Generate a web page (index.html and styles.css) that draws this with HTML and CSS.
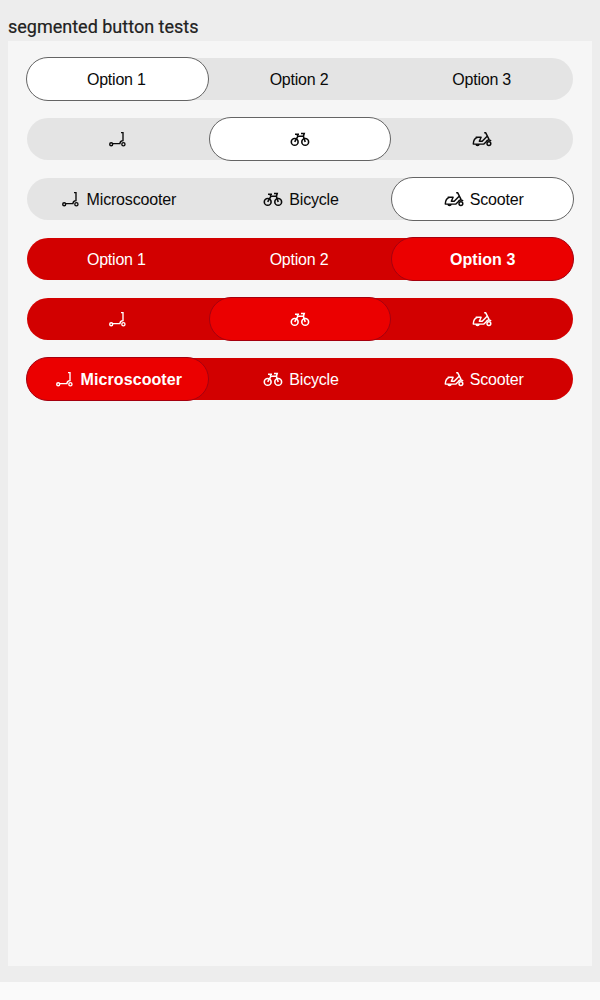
FILE: index.html
```html
<!DOCTYPE html>
<html lang="en">
<head>
<meta charset="utf-8">
<title>segmented button tests</title>
<link rel="stylesheet" href="styles.css">
</head>
<body>
<svg class="defs" aria-hidden="true">
  <symbol id="micro" viewBox="0 0 20 20">
    <circle cx="3.2" cy="15.2" r="1.5"/><circle cx="15.4" cy="15.2" r="1.6"/>
    <path d="M4.8 14.6H11.9C12 12.8 13.2 11.8 15 11.7V3.6H13"/>
  </symbol>
  <symbol id="bike" viewBox="0 0 20 20">
    <g stroke-width="1.6"><circle cx="4.7" cy="12.9" r="3.4"/><circle cx="15.2" cy="12.9" r="3.4"/>
    <path d="M4.7 12.9 7.9 7.3H13.5M5 5.3H9M7.2 5.4 7.9 7.6M11 4.5H14.2L13.4 7.3 15.2 12.9"/></g>
  </symbol>
  <symbol id="scooter" viewBox="0 0 20 20">
    <g stroke-width="1.45" stroke-linejoin="round"><circle cx="16.9" cy="14.6" r="1.9"/>
    <path d="M12.2 3.7H13.6L16.9 10.2 11.9 15.1H1.3C1.4 11.6 3 9 5.6 8.3M3.7 8.3H9.1L7.3 12.2H10.2L14.9 7.4M14 12.8C15 11.2 17.2 10.8 19.2 11.8M4 15.2C4.2 17.1 6.9 17.1 7.1 15.2"/></g>
  </symbol>
</svg>
<main class="page">
  <h1 class="title">segmented button tests</h1>
  <section class="panel">
    <div class="segmented">
      <button class="segment selected"><span class="label option">Option 1</span></button>
      <button class="segment"><span class="label option">Option 2</span></button>
      <button class="segment"><span class="label option">Option 3</span></button>
    </div>
    <div class="segmented">
      <button class="segment"><svg class="icon"><use href="#micro"/></svg></button>
      <button class="segment selected"><svg class="icon"><use href="#bike"/></svg></button>
      <button class="segment"><svg class="icon"><use href="#scooter"/></svg></button>
    </div>
    <div class="segmented">
      <button class="segment"><svg class="icon"><use href="#micro"/></svg><span class="label">Microscooter</span></button>
      <button class="segment"><svg class="icon"><use href="#bike"/></svg><span class="label">Bicycle</span></button>
      <button class="segment selected"><svg class="icon"><use href="#scooter"/></svg><span class="label">Scooter</span></button>
    </div>
    <div class="segmented red">
      <button class="segment"><span class="label option">Option 1</span></button>
      <button class="segment"><span class="label option">Option 2</span></button>
      <button class="segment selected"><span class="label">Option 3</span></button>
    </div>
    <div class="segmented red">
      <button class="segment"><svg class="icon"><use href="#micro"/></svg></button>
      <button class="segment selected"><svg class="icon"><use href="#bike"/></svg></button>
      <button class="segment"><svg class="icon"><use href="#scooter"/></svg></button>
    </div>
    <div class="segmented red">
      <button class="segment selected"><svg class="icon"><use href="#micro"/></svg><span class="label">Microscooter</span></button>
      <button class="segment"><svg class="icon"><use href="#bike"/></svg><span class="label">Bicycle</span></button>
      <button class="segment"><svg class="icon"><use href="#scooter"/></svg><span class="label">Scooter</span></button>
    </div>
  </section>
</main>
</body>
</html>
```
FILE: styles.css
```css
* { box-sizing: border-box; }
body { margin: 0; background: #fafafa; }
.defs { display: none; }
.page {
  height: 982px;
  padding: 16px 8px;
  background: #ededed;
}
.title {
  margin: 0;
  height: 25px;
  font: 400 18px/22px Roboto, sans-serif;
  color: #212121;
  -webkit-text-stroke: 0.2px #212121;
}
.panel {
  display: flex;
  flex-direction: column;
  gap: 18px;
  height: 925px;
  padding: 17px 19px;
  background: #f6f6f6;
}
/* the outer columns are narrower because their segments overhang by 1px */
.segmented {
  display: grid;
  grid-template-columns: calc((100% - 1px) / 3) 1fr calc((100% - 1px) / 3);
  height: 42px;
  border-radius: 21px;
  background: #e4e4e4;
  color: #0a0a0a;
}
.segment {
  display: flex;
  align-items: center;
  justify-content: center;
  gap: 6px;
  min-width: 0;
  margin: -1px 0;
  padding: 0;
  border: 1px solid transparent;
  border-radius: 22px;
  background: none;
  color: inherit;
  font: 400 16px/20px "Liberation Sans", Arial, sans-serif;
  letter-spacing: -0.18px;
}
.segment:first-child { margin-left: -1px; }
.segment:last-child { margin-right: -1px; }
.selected {
  border-color: #646464;
  background: #fff;
}
.label { padding-top: 2px; }
.option { padding-right: 2px; letter-spacing: -0.22px; }
.red { background: #d20000; color: #fff; }
.red .selected {
  border-color: #a5000f;
  background: #eb0000;
  font-weight: 700;
  letter-spacing: 0.08px;
}
.icon {
  flex: none;
  width: 20px;
  height: 20px;
  fill: none;
  stroke: currentColor;
  stroke-width: 1.35;
}
.icon:not(:only-child) { margin-left: 2px; }
.segment:first-child .icon:only-child { margin-left: 1px; }
.segment:last-child .icon:only-child { margin-right: 1px; }
```
